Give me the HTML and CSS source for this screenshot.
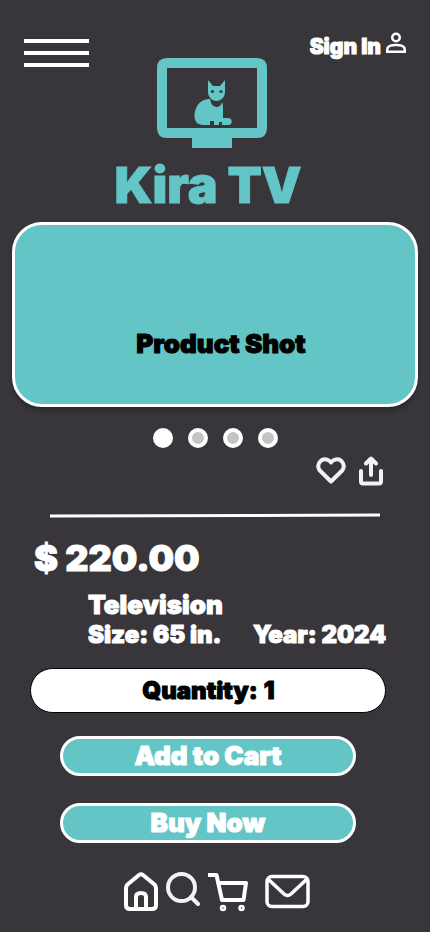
FILE: index.html
```html
<!DOCTYPE html>
<html lang="en">
<head>
<meta charset="utf-8">
<meta name="viewport" content="width=device-width, initial-scale=1">
<title>Kira TV</title>
<link rel="stylesheet" href="styles.css">
</head>
<body>
<header class="header">
  <button class="menu" type="button" aria-label="Menu">
    <span class="menu-bar"></span><span class="menu-bar"></span><span class="menu-bar"></span>
  </button>
  <div class="brand">
    <svg class="brand-logo" viewBox="0 0 110 90" aria-hidden="true">
      <path fill="#63c5c6" fill-rule="evenodd" d="M10 0H100Q110 0 110 10V70Q110 80 100 80H75V90H35V80H10Q0 80 0 70V10Q0 0 10 0ZM10 10V70H100V10Z"/>
      <path fill="#63c5c6" d="M52 41C42 41 37 51 37.500 59C38 65 42 67 47 67H53V63H57V67H62V64H65V67H71C76 67 76 60 71 60H66V49Q66 46 65 44Q64 49 59 49Q54 48 53 41Z"/>
      <path fill="#63c5c6" d="M51 22L56 28H63L68 22V34C68 39 64 43 59.500 43C55 43 51 39 51 34Z"/>
      <circle cx="55.500" cy="33.500" r="1.600" fill="#38363b"/><circle cx="64" cy="33.500" r="1.600" fill="#38363b"/>
    </svg>
    <h1 class="brand-name">Kira TV</h1>
  </div>
  <a class="sign-in" href="#sign-in">Sign In
    <svg class="sign-in-icon" viewBox="0 0 20 22" fill="none" stroke="#fff" stroke-width="2.500" aria-hidden="true">
      <circle cx="10" cy="5.500" r="3.750"/><path d="M1.250 19.750V17.500C1.250 14.500 5 13 10 13S18.750 14.500 18.750 17.500V19.750Z"/>
    </svg>
  </a>
</header>
<main>
  <section class="hero"><p class="hero-text">Product Shot</p></section>
  <div class="dots">
    <button class="dot dot-active" type="button" aria-label="Photo 1"></button>
    <button class="dot" type="button" aria-label="Photo 2"></button>
    <button class="dot" type="button" aria-label="Photo 3"></button>
    <button class="dot" type="button" aria-label="Photo 4"></button>
  </div>
  <div class="actions">
    <button class="icon-button" type="button" aria-label="Save">
      <svg width="30" height="30" viewBox="0 0 30 30" fill="none" stroke="#f3f1f3" stroke-width="4" stroke-linejoin="round" aria-hidden="true"><path d="M15 25.500L3.800 14.500C-.5 8.500 5.500 1 12 4Q14 5 15 6.500Q16 5 18 4C24.500 1 30.500 8.500 26.200 14.500Z"/></svg>
    </button>
    <button class="icon-button" type="button" aria-label="Share">
      <svg width="24" height="30" viewBox="0 0 24 30" fill="none" stroke="#f3f1f3" stroke-width="4" stroke-linecap="round" stroke-linejoin="round" aria-hidden="true"><path d="M2 15V25.500Q2 27.500 4 27.500H20Q22 27.500 22 25.500V15M12 19V3M7 7.500L12 2.500L17 7.500"/></svg>
    </button>
  </div>
  <svg class="rule" viewBox="0 0 330 5" preserveAspectRatio="none" aria-hidden="true"><path d="M0 3L330 2" stroke="#fff" stroke-width="3"/></svg>
  <p class="price">$ 220.00</p>
  <div class="details">
    <p class="detail detail-name">Television</p>
    <p class="detail">Size: 65 in.</p>
    <p class="detail">Year: 2024</p>
  </div>
  <form class="order">
    <label class="quantity">Quantity: <input class="quantity-input" type="text" inputmode="numeric" value="1"></label>
    <button class="buy" type="button">Add to Cart</button>
    <button class="buy" type="button">Buy Now</button>
  </form>
</main>
<nav class="nav">
  <a href="#home" aria-label="Home"><svg class="nav-icon" width="34" height="40" viewBox="0 0 34 40" fill="none" stroke="#fff" stroke-width="4" stroke-linejoin="round"><path d="M2 16Q2 14 3.500 12.500L15 3Q17 1.500 19 3L30.500 12.500Q32 14 32 16V33Q32 37 28 37H6Q2 37 2 33Z"/><path d="M12 37V25Q12 21 17 21T22 25V37" stroke-width="4"/></svg></a>
  <a href="#search" aria-label="Search"><svg class="nav-icon" width="34" height="40" viewBox="0 0 34 40" fill="none" stroke="#f3f1f3" stroke-width="4" stroke-linecap="round"><circle cx="15.500" cy="15.500" r="13.500" stroke-width="4"/><path d="M25 25L32 32"/></svg></a>
  <a href="#cart" aria-label="Cart"><svg class="nav-icon" width="40" height="40" viewBox="0 0 40 40" fill="none" stroke="#fff" stroke-width="4" stroke-linejoin="round"><path d="M0 3H8.500L14 28H35.500L38 11H10.500"/><circle cx="15" cy="36" r="2" stroke-width="2.500"/><circle cx="33.500" cy="36" r="2" stroke-width="2.500"/></svg></a>
  <a class="nav-mail" href="#mail" aria-label="Mail"><svg class="nav-icon" width="45" height="40" viewBox="0 0 45 40" fill="none" stroke="#fff" stroke-width="3.500" stroke-linejoin="round"><rect x="2" y="4.500" width="41" height="30" rx="5"/><path d="M3 7L19 22Q22.500 25 26 22L42 7"/></svg></a>
</nav>
</body>
</html>
```
FILE: styles.css
```css
* { box-sizing: border-box; margin: 0; }

body {
  background: #38363b;
  color: #fff;
  font-family: Inter, "Liberation Sans", sans-serif;
  font-weight: 900;
  font-size: 24px;
  line-height: 30px;
  -webkit-text-stroke: 1px currentColor;
}

button, input { font: inherit; color: inherit; }
button { padding: 0; border: 0; background: none; cursor: pointer; }
a { color: inherit; text-decoration: none; }
svg { display: block; }

.header {
  display: flex;
  align-items: flex-start;
  padding: 32px 24px 0;
}

.menu {
  display: flex;
  flex-direction: column;
  gap: 8px;
  width: 65px;
  margin-top: 7px;
}
.menu-bar { width: 100%; height: 4px; background: #fff; }

.brand {
  display: flex;
  flex-direction: column;
  align-items: center;
  margin: 26px 8px 0 auto;
}
.brand-logo { width: 118px; height: 90px; padding-left: 8px; }
.brand-name {
  margin-top: 9px;
  margin-bottom: -1px;
  color: #63c5c6;
  font-size: 50px;
  line-height: 56px;
  font-weight: 900;
  white-space: nowrap;
}

.sign-in {
  display: flex;
  gap: 5px;
  font-size: 21px;
  white-space: nowrap;
}
.sign-in-icon { width: 20px; height: 22px; }

.hero {
  display: flex;
  align-items: flex-end;
  justify-content: center;
  height: 185px;
  margin: 10px 12px 0;
  padding: 0 0 45px 12px;
  border: 3px solid #fff;
  border-radius: 30px;
  background: #63c5c6;
  box-shadow: 0 4px 4px #00000040;
  color: #000;
  font-size: 26px;
}

.dots {
  display: flex;
  justify-content: center;
  gap: 15px;
  margin-top: 21px;
}
.dot {
  width: 20px;
  height: 20px;
  border: 4px solid #fff;
  border-radius: 50%;
  background: #c4c4c4;
}
.dot-active { background: #fff; }

.actions {
  display: flex;
  justify-content: flex-end;
  gap: 13px;
  margin-top: 8px;
  padding-right: 47px;
}

.rule { width: calc(100% - 100px); height: 5px; margin: 27px 50px 0; }

.price {
  margin: 18px 34px 0;
  font-size: 36px;
  line-height: 44px;
}

.details {
  display: grid;
  grid-template-columns: auto auto;
  justify-content: space-between;
  margin: 10px 44px 0 88px;
  white-space: nowrap;
}
.detail-name { grid-column: 1 / -1; font-size: 26px; }

.order {
  display: flex;
  flex-direction: column;
  gap: 27px;
  margin: 18px 44px 0 30px;
}
.quantity {
  display: flex;
  align-items: center;
  justify-content: center;
  gap: 6px;
  height: 45px;
  margin-bottom: -4px;
  padding-left: 6px;
  border: 1px solid #000;
  border-radius: 23px;
  background: #fff;
  color: #000;
}
.quantity-input {
  width: 16px;
  padding: 0;
  border: 0;
  background: none;
}
.buy {
  height: 40px;
  margin: 0 30px;
  border: 3px solid #fff;
  border-radius: 20px;
  background: #63c5c6;
  font-size: 26px;
}

.nav {
  display: flex;
  justify-content: center;
  gap: 8px;
  margin-top: 29px;
  padding-left: 4px;
}
.nav-mail { margin-left: 9px; }
```
